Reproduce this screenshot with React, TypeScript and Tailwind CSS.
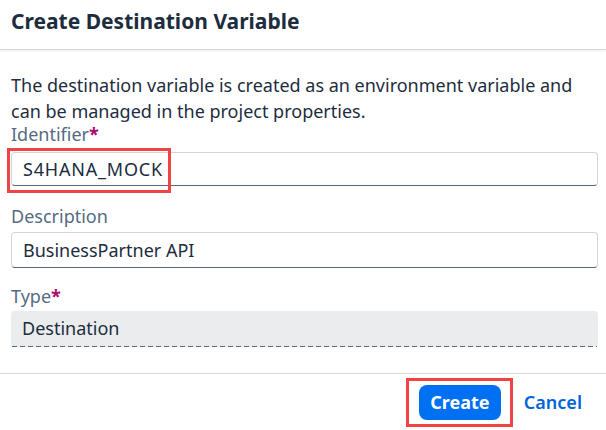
import React from "react";

const font = { fontFamily: '"Noto Sans", "Open Sans", Arial, sans-serif' };

function Label({ text, required }: { text: string; required?: boolean }) {
  return (
    <div className="h-[20px] text-[18px] leading-[20px] text-[#556b82]">
      {text}
      {required && <span className="text-[#aa0a6e] font-bold">*</span>}
    </div>
  );
}

export default function App() {
  return (
    <div style={font} className="w-[606px] h-[430px] bg-white flex flex-col overflow-hidden">
      <div className="h-[50px] shrink-0 flex items-center px-[11px] border-b border-[#d5d8dc] shadow-[0_1px_2px_rgba(0,0,0,0.08)]">
        <h1 className="text-[21px] font-bold text-[#1d2d3e] -mt-[5px]">Create Destination Variable</h1>
      </div>
      <div className="flex-1 pl-[11px] pr-[8px] pt-[22px]">
        <p className="text-[18px] leading-[26px] text-[#1d2d3e]">
          The destination variable is created as an environment variable and can be managed in the project properties.
        </p>
        <div>
          <Label text="Identifier" required />
        </div>
        <div className="relative mt-[8px]">
          <div className="h-[34px] rounded-[4px] border border-[#d0d5da] border-b-[#556b82] flex items-center px-[11px] text-[18px] tracking-[0.8px] text-[#1d2d3e]">
            S4HANA_MOCK
          </div>
          <div className="absolute left-[-4px] top-[-4px] w-[164px] h-[45px] border-[3px] border-[#f04444]" />
        </div>
        <div className="mt-[20px]">
          <Label text="Description" />
        </div>
        <div className="mt-[6px] h-[36px] rounded-[4px] border border-[#d0d5da] border-b-[#556b82] flex items-center px-[11px] text-[18px] text-[#1d2d3e]">
          BusinessPartner API
        </div>
        <div className="mt-[18px]">
          <Label text="Type" required />
        </div>
        <div className="mt-[5px] h-[36px] rounded-[4px] bg-[#eaecee] flex flex-col text-[18px] text-[#1d2d3e]">
          <div className="flex-1 flex items-center px-[11px]">Destination</div>
          <div className="h-px mx-[1px] bg-[repeating-linear-gradient(to_right,#556b82_0px,#556b82_5px,transparent_5px,transparent_8px)]" />
        </div>
      </div>
      <div className="h-[57px] shrink-0 border-t border-[#d9d9d9] flex items-center justify-end pr-[24px] gap-[23px]">
        <div className="relative">
          <button className="h-[35px] w-[82px] rounded-[8px] bg-[#0070f2] text-white font-bold text-[18px]">
            Create
          </button>
          <div className="absolute left-[-13px] top-[-7px] w-[107px] h-[49px] border-[3px] border-[#f04444]" />
        </div>
        <button className="text-[#0064d9] text-[18px] font-semibold">Cancel</button>
      </div>
    </div>
  );
}
